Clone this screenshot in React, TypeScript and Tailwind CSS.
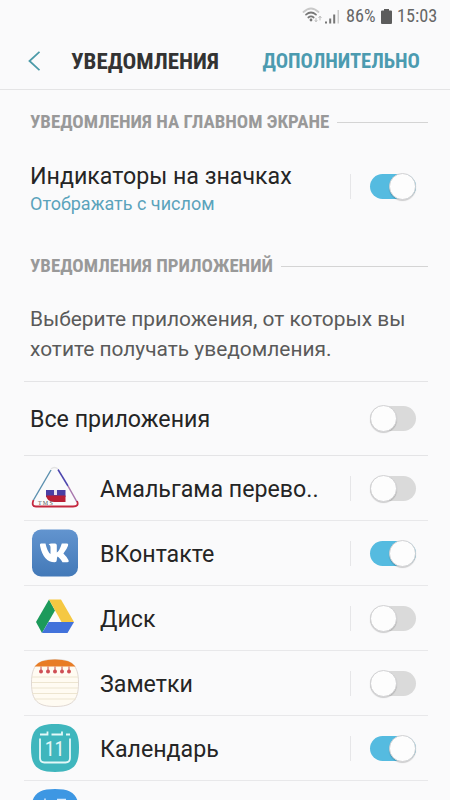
import React, { useState } from 'react';
import clsx from 'clsx';

function StatusBar() {
  return (
    <div className="flex h-8 items-center justify-end pr-[12px] text-[18.3px] text-[#666] [font-stretch:80%]">
      <svg className="h-5 w-[22px]" viewBox="0 0 22 20" fill="none" strokeLinecap="round">
        <path d="M1.5 6Q9-1 16.500 6" stroke="#c9c9c9" strokeWidth="1.800" />
        <path d="M4 8.700Q9 4.300 14 8.700" stroke="#777" strokeWidth="1.700" />
        <path d="M6.300 11.500Q9 9.200 11.700 11.500" stroke="#777" strokeWidth="1.700" />
        <circle cx="9" cy="14" r="1.400" fill="#777" />
        <path d="M14 12.500v3m-1-1 1 1.200 1-1.200M18 14v-3.500m-1.200 1.200 1.200-1.500 1.200 1.500" stroke="#bbb" strokeWidth="1" />
      </svg>
      <svg className="mr-[5px] ml-px h-5 w-4" viewBox="0 0 16 20">
        <path d="M0 15.500h2v2H0zM4.200 12.500h2v5h-2zM8.200 8.500h2v9h-2z" fill="#777" />
        <path d="M12.500 4h1.500v13.500h-1.500z" fill="#ccc" />
      </svg>
      <span className="w-[30px] whitespace-nowrap">86%</span>
      <svg className="mr-[5px] ml-[5px] h-[15px] w-[11px]" viewBox="0 0 11 15" fill="#5c5c5c">
        <path d="M3 0h5v1.500h2a1 1 0 0 1 1 1V14a1 1 0 0 1-1 1H1a1 1 0 0 1-1-1V2.500a1 1 0 0 1 1-1h2z" />
      </svg>
      <span className="w-[41px] whitespace-nowrap">15:03</span>
    </div>
  );
}

function SectionTitle({ children }: { children: React.ReactNode }) {
  return (
    <div className="flex h-6 items-center gap-2 pr-[22px] pl-[30px]">
      <h2 className="text-[18.85px] font-bold whitespace-nowrap text-[#999] [font-stretch:75%]">{children}</h2>
      <div className="h-px flex-1 bg-[#d4d4d4]" />
    </div>
  );
}

interface ToggleProps {
  defaultOn?: boolean;
}

function Toggle({ defaultOn = false }: ToggleProps) {
  const [on, setOn] = useState(defaultOn);

  return (
    <button
      role="switch"
      aria-checked={on}
      onClick={() => setOn(!on)}
      className={clsx(
        'flex h-[25px] w-[46px] shrink-0 items-center rounded-full',
        on ? 'justify-end bg-[#55bbe0]' : 'justify-start bg-[#dadada]'
      )}
    >
      <span className="size-[27px] shrink-0 rounded-full border border-[#d2d2d4] bg-[#fdfdfd] shadow-[0_1px_1px_rgba(0,0,0,0.18)]" />
    </button>
  );
}

function AmalgamaIcon() {
  return (
    <svg className="size-12" viewBox="0 0 48 48" fill="none">
      <path d="M20 6 2.500 36" stroke="#5a8fae" strokeWidth="1.400" />
      <path d="M27 5.500 37 22" stroke="#4d46ae" strokeWidth="1.500" />
      <path d="M37 22 46 38" stroke="#a877ae" strokeWidth="1.500" />
      <path d="M20 5q3.500-3 7 0" stroke="#e3e3e3" strokeWidth="1.500" />
      <path d="M2.500 36Q0 42.500 5 42.500H42Q48.500 42.500 46 37" stroke="#c4283f" strokeWidth="1.800" />
      <path d="M15 26h8v3h3v-3h8.500v7H15z" fill="#4a3fa4" />
      <path d="M15 31.500h19.500V38H23q-7 0-8-6.500" fill="#b91f35" />
      <path d="M23 26h3v5h-3z" fill="#e9e4ee" />
      <text x="7" y="40.500" fontSize="6" fill="#555" fontFamily="Liberation Serif" letterSpacing="1.200">TMS</text>
    </svg>
  );
}

function VkIcon() {
  return (
    <svg className="size-12" viewBox="0 0 48 48">
      <defs>
        <linearGradient id="vk" x2="0" y2="1">
          <stop stopColor="#6294cf" />
          <stop offset="1" stopColor="#4379b8" />
        </linearGradient>
      </defs>
      <rect x="1" y="0.500" width="46" height="47" rx="9" fill="url(#vk)" />
      <path
        d="M10 14.500h4.500q1.800 8.500 5 10.500v-7q0-1.700-1.800-2.700 1-.8 3-.8h3.400q1.700 0 1.700 1.800v7.200q2.600-1.400 5-9h5.200q1.800 0 1 2.200-1.200 3.600-4.600 7.800 3.600 3.500 5 6.500 1 2.200-1.200 2.200h-4.700q-2.900-4.500-5-5.600-.7 1.100-.7 3.400 0 2.200-2.200 2.200Q12.500 33.200 9 16.700q-.4-2.200 1-2.200z"
        fill="#fff"
      />
    </svg>
  );
}

function DriveIcon() {
  return (
    <svg className="size-12" viewBox="0 0 48 48">
      <path d="m18 5.500-13 22.500 6 11 13-22.500z" fill="#1c9a5b" />
      <path d="M18 5.500h12L43 28H30.500z" fill="#f5c842" />
      <path d="M17.500 28H43l-6.500 11H11z" fill="#4272db" />
    </svg>
  );
}

function NotesIcon() {
  return (
    <svg className="size-12" viewBox="0 0 48 48">
      <path d="M24 .5C41 .5 47.500 6 47.500 24S41 47.500 24 47.500.5 42 .5 24 7 .5 24 .5" fill="#fffbf2" stroke="#e0d8d2" />
      <path d="M3.500 7.500Q8 .5 24 .5t20.500 7z" fill="#e87c25" />
      <path d="M1 18h46M1 23.500h46M1 29h46M1 34.500h46M3 40h42" stroke="#ede5d0" strokeWidth="1" />
      <path d="M10 7.500v4M17 7.500v4M24 7.500v4M31 7.500v4M38 7.500v4" stroke="#cf6a62" strokeWidth="1.200" />
      <g fill="#cf4f55">
        <circle cx="10" cy="12.500" r="2" />
        <circle cx="17" cy="12.500" r="2" />
        <circle cx="24" cy="12.500" r="2" />
        <circle cx="31" cy="12.500" r="2" />
        <circle cx="38" cy="12.500" r="2" />
      </g>
    </svg>
  );
}

function CalendarIcon() {
  return (
    <svg className="size-12" viewBox="0 0 48 48">
      <path d="M24 0C42 0 48 6 48 24s-6 24-24 24S0 42 0 24 6 0 24 0" fill="#3fb6bd" />
      <path d="M9 14.500v19.500q0 4.500 4.500 4.500h21q4.500 0 4.500-4.500V14.500" fill="none" stroke="#e4f8f8" strokeWidth="1.800" />
      <path d="M9 10.500h7.500V7.500M20.500 10.500H31V7.500M35 10.500h4" fill="none" stroke="#e4f8f8" strokeWidth="1.800" />
      <text x="23.500" y="32" textAnchor="middle" fontSize="20" fill="#e4f8f8" fontFamily="Roboto" className="[font-stretch:80%]">11</text>
    </svg>
  );
}

function BlueIcon() {
  return (
    <svg className="size-12" viewBox="0 0 48 48">
      <path d="M24 0C42 0 48 6 48 24s-6 24-24 24S0 42 0 24 6 0 24 0" fill="#3d97e3" />
      <path d="M14 9.500v3M26 10.500h9" stroke="#d5eaff" strokeWidth="1.500" />
    </svg>
  );
}

const apps = [
  { name: 'Амальгама перево..', icon: <AmalgamaIcon />, on: false },
  { name: 'ВКонтакте', icon: <VkIcon />, on: true },
  { name: 'Диск', icon: <DriveIcon />, on: false },
  { name: 'Заметки', icon: <NotesIcon />, on: false },
  { name: 'Календарь', icon: <CalendarIcon />, on: true },
  { name: '', icon: <BlueIcon />, on: false },
];

export default function App() {
  return (
    <div className="h-[800px] w-[450px] overflow-hidden bg-[#fafafb] font-[Roboto,sans-serif] text-[#252525]">
      <StatusBar />
      <header className="flex h-[58px] items-center border-b border-[#e4e4e5] pr-[30px] pl-7">
        <svg className="h-5 w-3" viewBox="0 0 12 20" fill="none" stroke="#4b9aa8" strokeWidth="1.800">
          <path d="M11.500.8 1.500 10l10 9.200" />
        </svg>
        <h1 className="ml-[31px] pt-[3px] text-[22.9px] font-bold whitespace-nowrap text-[#333] [font-stretch:75%]">
          УВЕДОМЛЕНИЯ
        </h1>
        <button className="ml-auto pt-0.5 text-[20.5px] font-bold whitespace-nowrap text-[#4c9bb0] [font-stretch:75%]">
          ДОПОЛНИТЕЛЬНО
        </button>
      </header>

      <main>
        <div className="pt-5">
          <SectionTitle>УВЕДОМЛЕНИЯ НА ГЛАВНОМ ЭКРАНЕ</SectionTitle>
        </div>
        <div className="mt-[23px] flex h-[58px] items-center pr-[34px] pl-[30px]">
          <div className="flex-1 pt-[5px]">
            <div className="text-[23.2px] leading-[30px] whitespace-nowrap">Индикаторы на значках</div>
            <div className="text-[18px] leading-[25px] whitespace-nowrap text-[#5aa3bb]">Отображать с числом</div>
          </div>
          <div className="mr-[19px] h-[25px] w-px bg-[#e6e6e8]" />
          <Toggle defaultOn />
        </div>
        <div className="mt-[39px]">
          <SectionTitle>УВЕДОМЛЕНИЯ ПРИЛОЖЕНИЙ</SectionTitle>
        </div>
        <p className="mt-[26px] ml-[30px] text-[20.9px] leading-[30px] whitespace-nowrap text-[#5a5a5a]">
          Выберите приложения, от которых вы
          <br />
          хотите получать уведомления.
        </p>

        <div className="mt-[17px] mr-[22px] ml-6 flex h-[75px] items-center justify-between border-y border-[#e4e4e6] pr-3 pl-1.5">
          <span className="pt-0.5 text-[23.2px] whitespace-nowrap">Все приложения</span>
          <Toggle />
        </div>
        {apps.map((app, index) => (
          <div
            key={index}
            className="mr-[22px] ml-6 flex h-[65px] items-center border-b border-[#e8e8ea] pr-3 pl-[7px]"
          >
            {app.icon}
            <span className="ml-[21px] flex-1 pt-0.5 text-[23.2px] whitespace-nowrap">{app.name}</span>
            <div className="mr-[19px] h-[25px] w-px bg-[#e6e6e8]" />
            <Toggle defaultOn={app.on} />
          </div>
        ))}
      </main>
    </div>
  );
}
